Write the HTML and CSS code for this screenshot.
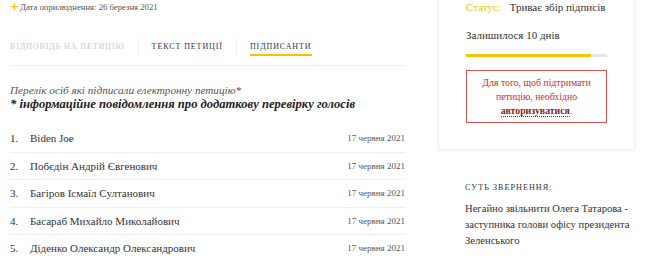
FILE: index.html
```html
<!DOCTYPE html>
<html lang="uk">
<head>
    <meta charset="UTF-8">
    <meta name="viewport" content="width=device-width, initial-scale=1.0">
    <title>Петиція</title>
    <link rel="stylesheet" href="styles.css">
</head>
<body>
    <div class="page">
        <!-- Main column -->
        <div class="main">
            <div class="meta"><span class="plus">+</span>Дата оприлюднення: 26 березня 2021</div>

            <div class="tabs">
                <span class="tab tab-disabled">Відповідь на петицію</span>
                <span class="tab-sep"></span>
                <span class="tab">Текст петиції</span>
                <span class="tab-sep"></span>
                <span class="tab tab-active">Підписанти</span>
            </div>

            <div class="intro">
                <p class="intro-note">Перелік осіб які підписали електронну петицію*</p>
                <p class="intro-info">* інформаційне повідомлення про додаткову перевірку голосів</p>
            </div>

            <div class="signers">
                <div class="signer">
                    <span class="signer-num">1.</span>
                    <span class="signer-name">Biden Joe</span>
                    <span class="signer-date">17 червня 2021</span>
                </div>
                <div class="signer">
                    <span class="signer-num">2.</span>
                    <span class="signer-name">Побєдін Андрій Євгенович</span>
                    <span class="signer-date">17 червня 2021</span>
                </div>
                <div class="signer">
                    <span class="signer-num">3.</span>
                    <span class="signer-name">Багіров Ісмаїл Султанович</span>
                    <span class="signer-date">17 червня 2021</span>
                </div>
                <div class="signer">
                    <span class="signer-num">4.</span>
                    <span class="signer-name">Басараб Михайло Миколайович</span>
                    <span class="signer-date">17 червня 2021</span>
                </div>
                <div class="signer">
                    <span class="signer-num">5.</span>
                    <span class="signer-name">Діденко Олександр Олександрович</span>
                    <span class="signer-date">17 червня 2021</span>
                </div>
            </div>
        </div>

        <!-- Sidebar -->
        <div class="aside">
            <div class="status-box">
                <div class="status"><span class="status-label">Статус:</span> Триває збір підписів</div>
                <div class="days">Залишилося 10 днів</div>
                <div class="progress"><div class="progress-fill" style="width: 89%"></div></div>
                <div class="auth-note">
                    Для того, щоб підтримати петицію, необхідно <a href="#" class="auth-link">авторизуватися</a>.
                </div>
            </div>

            <div class="essence">
                <h4>Суть звернення:</h4>
                <p>Негайно звільнити Олега Татарова - заступника голови офісу президента Зеленського</p>
            </div>
        </div>
    </div>
</body>
</html>
```

FILE: styles.css
```css
/* Global Styling */
body {
    font-family: "Liberation Serif", "DejaVu Serif", serif;
    background-color: #fff;
    margin: 0;
    padding: 0;
    color: #333;
}

p {
    margin: 0;
}

.page {
    display: flex;
    padding: 0 10px;
}

/* Main column */
.main {
    width: 395px;
    flex-shrink: 0;
}

.meta {
    font-size: 8.7px;
    line-height: 13px;
    color: #555;
}

.plus {
    display: inline-block;
    width: 10px;
    color: #f5c400;
    font-family: "DejaVu Sans", sans-serif;
    font-weight: bold;
    font-size: 11px;
}

/* Tabs */
.tabs {
    display: flex;
    align-items: center;
    margin-top: 23px;
    padding-bottom: 9px;
    border-bottom: 1px solid #eee;
}

.tab {
    font-size: 8px;
    letter-spacing: 0.9px;
    text-transform: uppercase;
    color: #333;
    padding: 5px 0 3px;
    border-bottom: 2px solid transparent;
}

.tab-disabled {
    color: #c8c8c8;
}

.tab-active {
    border-bottom-color: #f5c400;
}

.tab-sep {
    width: 1px;
    height: 18px;
    background-color: #eee;
    margin: 0 13px;
}

/* Intro */
.intro {
    padding-top: 17px;
    padding-bottom: 14px;
}

.intro-note {
    font-style: italic;
    font-size: 11.2px;
    line-height: 14px;
    color: #555;
}

.intro-info {
    font-style: italic;
    font-weight: bold;
    font-size: 12.6px;
    line-height: 14px;
    color: #222;
}

/* Signers list */
.signer {
    display: flex;
    align-items: center;
    height: 26.5px;
    border-bottom: 1px solid #eee;
}

.signer-num {
    width: 20px;
    font-size: 11px;
    color: #333;
}

.signer-name {
    flex: 1;
    font-size: 11px;
    color: #333;
}

.signer-date {
    font-size: 9px;
    color: #555;
}

/* Sidebar */
.aside {
    width: 197px;
    flex-shrink: 0;
    margin-left: 33px;
}

.status-box {
    border: 1px solid #f0f0f0;
    border-top: none;
    box-shadow: 0 1px 3px rgba(0, 0, 0, 0.06);
    padding: 0 27px;
    height: 150px;
    box-sizing: border-box;
}

.status {
    font-size: 11px;
    line-height: 15px;
    color: #333;
    white-space: nowrap;
}

.status-label {
    color: #f5c400;
    margin-right: 6px;
}

.days {
    font-size: 11px;
    line-height: 15px;
    margin-top: 13px;
    color: #333;
}

.progress {
    height: 3px;
    background-color: #e6e6e6;
    margin-top: 11px;
}

.progress-fill {
    height: 100%;
    background-color: #f5c400;
}

.auth-note {
    margin-top: 13px;
    border: 1px solid #d9534f;
    padding: 5px 6px 4px;
    text-align: center;
    font-size: 9.8px;
    line-height: 14px;
    color: #c9302c;
}

.auth-link {
    color: #8b1d1d;
    font-weight: bold;
    text-decoration: none;
    border-bottom: 1px dotted #8b1d1d;
}

.essence {
    padding: 33px 0 0 27px;
    margin-right: -8px;
}

.essence h4 {
    margin: 0 0 9px;
    font-size: 8.2px;
    font-weight: normal;
    letter-spacing: 1px;
    text-transform: uppercase;
    color: #333;
}

.essence p {
    font-size: 10.6px;
    line-height: 16px;
    color: #333;
}
```
